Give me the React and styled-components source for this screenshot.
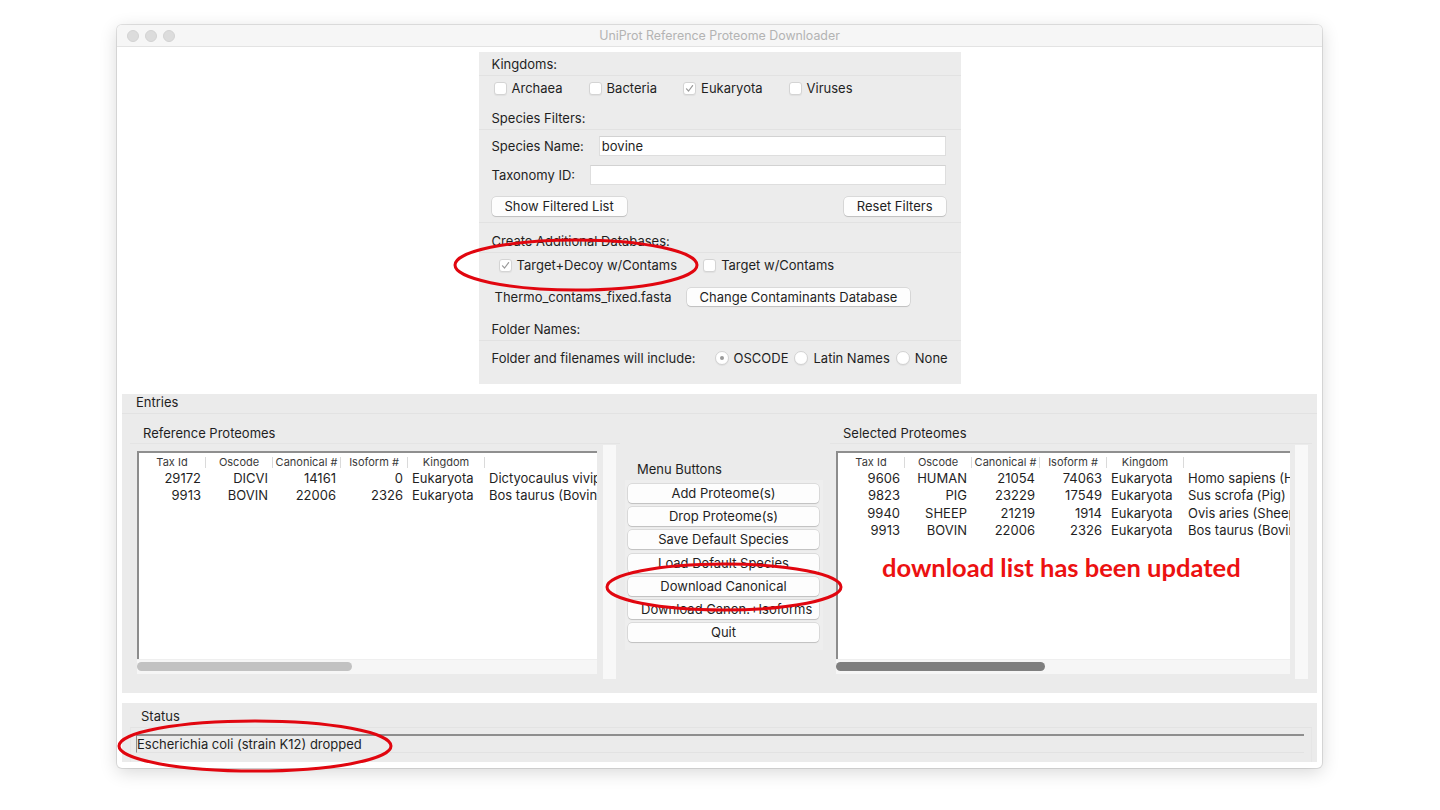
import React from 'react';
import styled, { createGlobalStyle } from 'styled-components';

const UI_FONT = `Inter, "Liberation Sans", "Noto Sans", sans-serif`;

const GlobalStyle = createGlobalStyle`
  html, body { margin: 0; padding: 0; background: #fff; }
  body { font-family: ${UI_FONT}; font-size: 13px; color: #1f1f1f; }
  * { box-sizing: border-box; }
`;

const REFERENCE = [
  ['29172', 'DICVI', '14161', '0', 'Eukaryota', 'Dictyocaulus viviparus (Bovine lungworm)'],
  ['9913', 'BOVIN', '22006', '2326', 'Eukaryota', 'Bos taurus (Bovine)'],
];

const SELECTED = [
  ['9606', 'HUMAN', '21054', '74063', 'Eukaryota', 'Homo sapiens (Human)'],
  ['9823', 'PIG', '23229', '17549', 'Eukaryota', 'Sus scrofa (Pig)'],
  ['9940', 'SHEEP', '21219', '1914', 'Eukaryota', 'Ovis aries (Sheep)'],
  ['9913', 'BOVIN', '22006', '2326', 'Eukaryota', 'Bos taurus (Bovine)'],
];

const COLUMNS = ['Tax Id', 'Oscode', 'Canonical #', 'Isoform #', 'Kingdom', ''];

const MENU = [
  'Add Proteome(s)',
  'Drop Proteome(s)',
  'Save Default Species',
  'Load Default Species',
  'Download Canonical',
  'Download Canon.+Isoforms',
  'Quit',
];

function CheckMark() {
  return (
    <svg width="9" height="9" viewBox="0 0 9 9">
      <polyline points="1.5,4.8 3.6,7 7.6,1.6" fill="none" stroke="#9a9a9a" strokeWidth="1.2" strokeLinecap="round" strokeLinejoin="round" />
    </svg>
  );
}

function CheckItem({ label, checked }) {
  return (
    <Styled.CheckItem>
      <Styled.Box>{checked && <CheckMark />}</Styled.Box>
      <span>{label}</span>
    </Styled.CheckItem>
  );
}

function RadioItem({ label, selected }) {
  return (
    <Styled.CheckItem>
      <Styled.Radio>{selected && <Styled.Dot />}</Styled.Radio>
      <span>{label}</span>
    </Styled.CheckItem>
  );
}

function ProteomeList({ rows, thumb, dark }) {
  return (
    <Styled.ListBox>
      <Styled.ListView>
        <Styled.HeaderRow>
          {COLUMNS.map((c, i) => (
            <Styled.HeadCell key={i} $last={i === COLUMNS.length - 1}>{c}</Styled.HeadCell>
          ))}
        </Styled.HeaderRow>
        {rows.map((r) => (
          <Styled.Row key={r[0]}>
            {r.map((v, i) => (
              <Styled.Cell key={i} $left={i >= 4}>{v}</Styled.Cell>
            ))}
          </Styled.Row>
        ))}
      </Styled.ListView>
      <Styled.HScroll>
        <Styled.Thumb $w={thumb} $dark={dark} />
      </Styled.HScroll>
    </Styled.ListBox>
  );
}

function App() {
  return (
    <Styled.Page>
      <GlobalStyle />
      <Styled.Window>
        <Styled.TitleBar>
          <Styled.Lights>
            <Styled.Light />
            <Styled.Light />
            <Styled.Light />
          </Styled.Lights>
          <Styled.Title>UniProt Reference Proteome Downloader</Styled.Title>
        </Styled.TitleBar>

        <Styled.Content>
          <Styled.FilterPanel>
            <Styled.SectionHead>Kingdoms:</Styled.SectionHead>
            <Styled.CheckRow $pad={2}>
              <CheckItem label="Archaea" />
              <CheckItem label="Bacteria" />
              <CheckItem label="Eukaryota" checked />
              <CheckItem label="Viruses" />
            </Styled.CheckRow>

            <Styled.SectionHead $top={6}>Species Filters:</Styled.SectionHead>
            <Styled.FieldRow $top={6}>
              <span>Species Name:</span>
              <Styled.TextInput>bovine</Styled.TextInput>
            </Styled.FieldRow>
            <Styled.FieldRow $top={9}>
              <span>Taxonomy ID:</span>
              <Styled.TextInput />
            </Styled.FieldRow>
            <Styled.ButtonRow>
              <Styled.MacButton>Show Filtered List</Styled.MacButton>
              <Styled.MacButton>Reset Filters</Styled.MacButton>
            </Styled.ButtonRow>

            <Styled.SectionHead $top={6}>Create Additional Databases:</Styled.SectionHead>
            <Styled.CheckRow $pad={7} $gap={26}>
              <CheckItem label="Target+Decoy w/Contams" checked />
              <CheckItem label="Target w/Contams" />
            </Styled.CheckRow>
            <Styled.FastaRow>
              <span>Thermo_contams_fixed.fasta</span>
              <Styled.MacButton $h={18}>Change Contaminants Database</Styled.MacButton>
            </Styled.FastaRow>

            <Styled.SectionHead $top={11}>Folder Names:</Styled.SectionHead>
            <Styled.RadioRow>
              <span>Folder and filenames will include:</span>
              <Styled.RadioGroup>
                <RadioItem label="OSCODE" selected />
                <RadioItem label="Latin Names" />
                <RadioItem label="None" />
              </Styled.RadioGroup>
            </Styled.RadioRow>
          </Styled.FilterPanel>

          <Styled.EntriesPanel>
            <Styled.PanelHead>Entries</Styled.PanelHead>
            <Styled.EntriesBody>
              <Styled.ListColumn $w={490}>
                <Styled.ListLabel>Reference Proteomes</Styled.ListLabel>
                <Styled.ListArea $pad={7}>
                  <ProteomeList rows={REFERENCE} thumb={215} />
                  <Styled.VTrack />
                </Styled.ListArea>
              </Styled.ListColumn>

              <Styled.MenuColumn>
                <Styled.MenuLabel>Menu Buttons</Styled.MenuLabel>
                <Styled.MenuGroup>
                  {MENU.map((m) => (
                    <Styled.MenuButton key={m}>{m}</Styled.MenuButton>
                  ))}
                </Styled.MenuGroup>
              </Styled.MenuColumn>

              <Styled.ListColumn $w={482}>
                <Styled.ListLabel>Selected Proteomes</Styled.ListLabel>
                <Styled.ListArea $pad={6}>
                  <ProteomeList rows={SELECTED} thumb={209} dark />
                  <Styled.VTrack />
                </Styled.ListArea>
              </Styled.ListColumn>
            </Styled.EntriesBody>
          </Styled.EntriesPanel>

          <Styled.StatusPanel>
            <Styled.StatusHead>Status</Styled.StatusHead>
            <Styled.StatusFrame>
              <Styled.StatusField>Escherichia coli (strain K12) dropped</Styled.StatusField>
            </Styled.StatusFrame>
          </Styled.StatusPanel>
        </Styled.Content>
      </Styled.Window>

      {/* annotation marks drawn over the screenshot */}
      <Styled.Marks width="1440" height="810" viewBox="0 0 1440 810">
        <ellipse cx="576" cy="265" rx="121" ry="25" />
        <ellipse cx="724" cy="587" rx="117" ry="23" />
        <ellipse cx="255" cy="746" rx="136" ry="25" />
      </Styled.Marks>
      <Styled.Note>download list has been updated</Styled.Note>
    </Styled.Page>
  );
}

const Styled = {
  Page: styled.div`
    position: relative;
    width: 1440px;
    height: 810px;
    padding: 25px 0 0 117px;
    overflow: hidden;
  `,
  Window: styled.div`
    width: 1205px;
    height: 743px;
    border-radius: 5px;
    overflow: hidden;
    background: #fff;
    box-shadow: 0 0 0 1px rgba(0, 0, 0, 0.1), 0 4px 18px rgba(0, 0, 0, 0.16);
    display: flex;
    flex-direction: column;
  `,
  TitleBar: styled.div`
    height: 22px;
    flex: none;
    display: flex;
    align-items: center;
    background: #f6f6f6;
    border-bottom: 1px solid #e3e3e3;
  `,
  Lights: styled.div`
    width: 64px;
    display: flex;
    gap: 6px;
    padding-left: 10px;
  `,
  Light: styled.span`
    width: 12px;
    height: 12px;
    border-radius: 50%;
    background: #dcdcdc;
    border: 1px solid #d2d2d2;
  `,
  Title: styled.div`
    flex: 1;
    padding-right: 64px;
    text-align: center;
    color: #b3b3b3;
    font-size: 12.4px;
  `,
  Content: styled.div`
    flex: 1;
    display: flex;
    flex-direction: column;
    padding: 5px 5px 5px;
  `,
  FilterPanel: styled.div`
    align-self: center;
    width: 482px;
    height: 332px;
    background: #ececec;
    padding: 0 15px 0 13px;
    display: flex;
    flex-direction: column;
  `,
  SectionHead: styled.div`
    height: 24px;
    line-height: 25px;
    margin: ${(p) => p.$top || 0}px -15px 0 -13px;
    padding-left: 13px;
    border-bottom: 1px solid #e2e2e2;
  `,
  CheckRow: styled.div`
    height: 24px;
    display: flex;
    align-items: center;
    gap: ${(p) => p.$gap || 26}px;
    padding-left: ${(p) => p.$pad || 0}px;
  `,
  CheckItem: styled.label`
    display: flex;
    align-items: center;
    gap: 5px;
    white-space: nowrap;
  `,
  Box: styled.span`
    width: 13px;
    height: 13px;
    border-radius: 3px;
    background: #fff;
    border: 1px solid #d4d4d4;
    box-shadow: 0 1px 1px rgba(0, 0, 0, 0.05);
    display: flex;
    align-items: center;
    justify-content: center;
  `,
  Radio: styled.span`
    width: 14px;
    height: 14px;
    border-radius: 50%;
    background: #fff;
    border: 1px solid #d2d2d2;
    box-shadow: 0 1px 1px rgba(0, 0, 0, 0.05);
    display: flex;
    align-items: center;
    justify-content: center;
  `,
  Dot: styled.span`
    width: 4px;
    height: 4px;
    border-radius: 50%;
    background: #9a9a9a;
  `,
  FieldRow: styled.div`
    height: 20px;
    margin-top: ${(p) => p.$top}px;
    display: flex;
    align-items: center;
    gap: 15px;
    white-space: nowrap;
  `,
  TextInput: styled.div`
    flex: 1;
    height: 20px;
    background: #fff;
    border: 1px solid #dedede;
    border-top-color: #d2d2d2;
    padding-left: 2px;
    line-height: 18px;
  `,
  ButtonRow: styled.div`
    margin: 12px -15px 0 -13px;
    padding: 0 15px 6px 13px;
    display: flex;
    justify-content: space-between;
    border-bottom: 1px solid #e2e2e2;
  `,
  MacButton: styled.div`
    height: ${(p) => p.$h || 19}px;
    line-height: ${(p) => p.$h || 19}px;
    padding: 0 13px;
    background: #fdfdfd;
    border-radius: 4px;
    box-shadow: 0 0 0 0.5px rgba(0, 0, 0, 0.16), 0 1px 1px rgba(0, 0, 0, 0.12);
    white-space: nowrap;
  `,
  FastaRow: styled.div`
    height: 18px;
    margin-top: 11px;
    padding-left: 3px;
    display: flex;
    align-items: center;
    gap: 15px;
    white-space: nowrap;
  `,
  RadioRow: styled.div`
    height: 21px;
    margin-top: 6px;
    display: flex;
    align-items: center;
    gap: 19px;
    white-space: nowrap;
  `,
  RadioGroup: styled.div`
    display: flex;
    align-items: center;
    gap: 6px;
  `,
  EntriesPanel: styled.div`
    margin-top: 10px;
    height: 299px;
    background: #ebebeb;
    display: flex;
    flex-direction: column;
  `,
  PanelHead: styled.div`
    height: 20px;
    line-height: 17px;
    padding-left: 14px;
    border-bottom: 1px solid #e2e2e2;
  `,
  EntriesBody: styled.div`
    flex: 1;
    display: flex;
    padding: 0 5px 0 8px;
  `,
  ListColumn: styled.div`
    width: ${(p) => p.$w}px;
    display: flex;
    flex-direction: column;
  `,
  ListLabel: styled.div`
    height: 30px;
    padding: 11px 0 0 13px;
    line-height: 16px;
    border-bottom: 1px solid #e4e4e4;
  `,
  ListArea: styled.div`
    display: flex;
    gap: ${(p) => p.$pad - 1}px;
    padding: 1px 4px 0 ${(p) => p.$pad}px;
  `,
  ListBox: styled.div`
    flex: 1;
    margin-top: 6px;
    height: 223px;
    display: flex;
    flex-direction: column;
    overflow: hidden;
  `,
  ListView: styled.div`
    flex: 1;
    background: #fff;
    border-top: 2px solid #8f8f8f;
    border-left: 2px solid #8c8c8c;
    overflow: hidden;
  `,
  HeaderRow: styled.div`
    display: grid;
    grid-template-columns: 67px 67px 68px 67px 77px 1fr;
    height: 17px;
    padding-top: 1px;
    font-size: 11px;
    color: #3a3a3a;
    align-items: center;
  `,
  HeadCell: styled.div`
    text-align: center;
    line-height: 11px;
    border-right: ${(p) => (p.$last ? 'none' : '1px solid #dadada')};
  `,
  Row: styled.div`
    display: grid;
    grid-template-columns: 67px 67px 68px 67px 77px 1fr;
    height: 17.3px;
    line-height: 17px;
    white-space: nowrap;
  `,
  Cell: styled.div`
    text-align: ${(p) => (p.$left ? 'left' : 'right')};
    padding: ${(p) => (p.$left ? '0 0 0 4px' : '0 5px 0 0')};
    overflow: ${(p) => (p.$left ? 'visible' : 'hidden')};
  `,
  HScroll: styled.div`
    height: 15px;
    flex: none;
    background: #f6f6f6;
    border-top: 1px solid #efefef;
    padding: 2px 0 0 0;
  `,
  Thumb: styled.div`
    width: ${(p) => p.$w}px;
    height: 9px;
    border-radius: 5px;
    background: ${(p) => (p.$dark ? '#7f7f7f' : '#c2c2c2')};
  `,
  VTrack: styled.div`
    width: 13px;
    height: 234px;
    flex: none;
    background: #f8f8f8;
  `,
  MenuColumn: styled.div`
    width: 210px;
    padding: 47px 0 0 5px;
    display: flex;
    flex-direction: column;
  `,
  MenuLabel: styled.div`
    line-height: 16px;
    padding-left: 12px;
  `,
  MenuGroup: styled.div`
    margin-top: 3px;
    width: 198px;
    padding: 4px 4px 8px 3px;
    background: #eeeeee;
    display: flex;
    flex-direction: column;
    gap: 4.2px;
  `,
  MenuButton: styled.div`
    height: 19px;
    line-height: 19px;
    padding: 0 13px;
    text-align: center;
    background: #fdfdfd;
    border-radius: 4px;
    box-shadow: 0 0 0 0.5px rgba(0, 0, 0, 0.16), 0 1px 1px rgba(0, 0, 0, 0.12);
    white-space: nowrap;
    overflow: hidden;
  `,
  StatusPanel: styled.div`
    margin-top: 10px;
    height: 59px;
    background: #ebebeb;
    display: flex;
    flex-direction: column;
  `,
  StatusHead: styled.div`
    height: 24px;
    line-height: 26px;
    padding-left: 19px;
  `,
  StatusFrame: styled.div`
    flex: 1;
    margin: 0 5px 0 8px;
    padding: 6px 7px 0 5px;
    border-top: 1px solid #e3e3e3;
    border-left: 1px solid #e6e6e6;
    border-right: 1px solid #e6e6e6;
  `,
  StatusField: styled.div`
    height: 19px;
    line-height: 17px;
    border-top: 2px solid #8e8e8e;
    border-left: 1px solid #8e8e8e;
    border-bottom: 1px solid #e2e2e2;
    white-space: nowrap;
  `,
  Marks: styled.svg`
    position: absolute;
    left: 0;
    top: 0;
    pointer-events: none;
    ellipse {
      fill: none;
      stroke: #e1060f;
      stroke-width: 3;
    }
  `,
  Note: styled.div`
    position: absolute;
    left: 882px;
    top: 551px;
    font-family: Lato, "Liberation Sans", sans-serif;
    font-weight: 700;
    font-size: 25.5px;
    line-height: 32px;
    color: #ec1111;
    white-space: nowrap;
  `,
};

export default App;
